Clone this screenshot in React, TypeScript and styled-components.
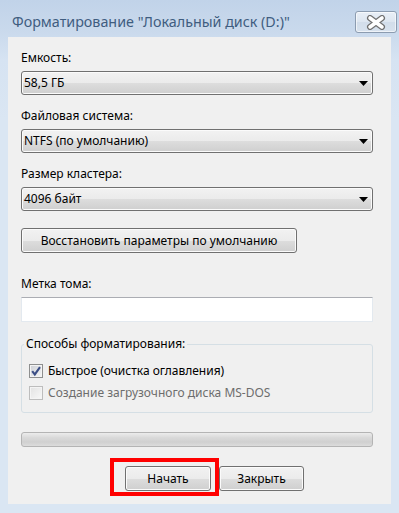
import styled, { createGlobalStyle } from "styled-components";

const GlobalStyle = createGlobalStyle`
  body {
    margin: 0;
    font-family: "Noto Sans", "Open Sans", sans-serif;
    font-size: 12px;
    color: #000;
  }
  * {
    box-sizing: border-box;
  }
`;

const Window = styled.div`
  width: 399px;
  height: 513px;
  display: flex;
  flex-direction: column;
  background: linear-gradient(#c1d3e9 0, #c9d9ec 30px, #d6e3f2 60px, #dae6f3 120px);
`;

const TitleBar = styled.div`
  height: 37px;
  padding: 11px 2px 0 12px;
  display: flex;
  justify-content: space-between;
  align-items: flex-start;
`;

const Title = styled.div`
  font-size: 14.3px;
  line-height: 22px;
  color: #3f5d80;
`;

const CloseButton = styled.div`
  width: 42px;
  height: 22px;
  border: 1px solid #8c9cb0;
  border-radius: 3px;
  background: linear-gradient(#e9eff7, #dde6f0 50%, #d2ddea 51%, #d8e2ee);
  box-shadow: inset 0 0 0 1px rgba(255, 255, 255, 0.6);
  display: flex;
  justify-content: center;
  align-items: center;
`;

const Panel = styled.div`
  flex: 1;
  margin: 0 8px 9px 8px;
  padding: 13px 18px 0 13px;
  background: #f0f0f0;
  display: flex;
  flex-direction: column;
`;

const Label = styled.div<{ $top?: number }>`
  line-height: 16px;
  margin-top: ${(p) => p.$top ?? 0}px;
  margin-bottom: 5px;
`;

const Select = styled.div`
  height: 24px;
  border: 1px solid #707070;
  border-radius: 3px;
  padding: 0 4px 0 2px;
  background: linear-gradient(#f2f2f2, #ebebeb 50%, #dddddd 51%, #cfcfcf);
  box-shadow: inset 0 0 0 1px #fbfbfb;
  display: flex;
  justify-content: space-between;
  align-items: center;
  margin-bottom: 13px;
  line-height: 16px;
`;

const PushButton = styled.div<{ $width: number; $top?: number }>`
  width: ${(p) => p.$width}px;
  height: 25px;
  margin-top: ${(p) => p.$top ?? 0}px;
  border: 1px solid #707070;
  border-radius: 3px;
  background: linear-gradient(#f2f2f2, #ebebeb 50%, #dddddd 51%, #cfcfcf);
  box-shadow: inset 0 0 0 1px #fbfbfb;
  display: flex;
  justify-content: center;
  align-items: center;
  flex-shrink: 0;
`;

const TextBox = styled.input`
  height: 25px;
  width: 100%;
  border: 1px solid #e3e9ef;
  border-top-color: #abadb3;
  background: #fff;
  outline: none;
  font: inherit;
  padding: 0 3px;
`;

const Group = styled.fieldset`
  margin: 14px 0 0 0;
  padding: 8px 7px 8px 7px;
  border: 1px solid #d5dfe5;
  border-radius: 3px;
  min-width: 0;
`;

const Legend = styled.legend`
  padding: 0 2px;
  line-height: 16px;
  margin-left: -5px;
`;

const CheckRow = styled.div`
  height: 22px;
  display: flex;
  align-items: center;
  gap: 5px;
`;

const CheckBox = styled.div<{ $disabled?: boolean }>`
  width: 14px;
  height: 14px;
  border: 1px solid ${(p) => (p.$disabled ? "#bdbdbd" : "#8e8f8f")};
  background: ${(p) =>
    p.$disabled
      ? "linear-gradient(135deg, #e2e2e2, #f8f8f8)"
      : "linear-gradient(135deg, #cdd0d6, #f6f6f6)"};
  box-shadow: inset 0 0 0 1px #f4f4f4;
  display: flex;
  justify-content: center;
  align-items: center;
`;

const CheckText = styled.span<{ $disabled?: boolean }>`
  line-height: 16px;
  color: ${(p) => (p.$disabled ? "#6d6d6d" : "#000")};
`;

const Progress = styled.div`
  margin-top: 19px;
  height: 15px;
  border: 1px solid #b4b4b4;
  border-radius: 3px;
  background: linear-gradient(#ececec, #dadada 35%, #d0d0d0 70%, #dcdcdc);
`;

const ButtonRow = styled.div`
  margin-top: 11px;
  padding-left: 89px;
  display: flex;
  align-items: flex-start;
`;

const Highlight = styled.div`
  border: 4px solid #ff0000;
  padding: 4px 4px 1px 11px;
`;

const Arrow = () => (
  <svg width="9" height="5" viewBox="0 0 9 5">
    <polygon points="0,0 9,0 4.5,5" fill="#000" />
  </svg>
);

const Check = () => (
  <svg width="12" height="12" viewBox="0 0 12 12">
    <path d="M2.2 6.2 L4.8 9.4 L10 2.2" fill="none" stroke="#3c4f86" strokeWidth="2.1" />
  </svg>
);

const CloseGlyph = () => (
  <svg width="20" height="15" viewBox="0 0 20 15">
    <path d="M4 3 L16 12 M16 3 L4 12" stroke="#707070" strokeWidth="6" strokeLinecap="round" />
    <path d="M4 3 L16 12 M16 3 L4 12" stroke="#ffffff" strokeWidth="3.6" strokeLinecap="round" />
  </svg>
);

const fields = [
  { label: "Емкость:", value: "58,5 ГБ" },
  { label: "Файловая система:", value: "NTFS (по умолчанию)" },
  { label: "Размер кластера:", value: "4096 байт" },
];

export default function App() {
  return (
    <>
      <GlobalStyle />
      <Window>
        <TitleBar>
          <Title>Форматирование "Локальный диск (D:)"</Title>
          <CloseButton>
            <CloseGlyph />
          </CloseButton>
        </TitleBar>
        <Panel>
          {fields.map((f) => (
            <div key={f.label}>
              <Label>{f.label}</Label>
              <Select>
                <span>{f.value}</span>
                <Arrow />
              </Select>
            </div>
          ))}
          <PushButton $width={276} $top={4}>
            Восстановить параметры по умолчанию
          </PushButton>
          <Label $top={23}>Метка тома:</Label>
          <TextBox defaultValue="" />
          <Group>
            <Legend>Способы форматирования:</Legend>
            <CheckRow>
              <CheckBox>
                <Check />
              </CheckBox>
              <CheckText>Быстрое (очистка оглавления)</CheckText>
            </CheckRow>
            <CheckRow>
              <CheckBox $disabled />
              <CheckText $disabled>Создание загрузочного диска MS-DOS</CheckText>
            </CheckRow>
          </Group>
          <Progress />
          <ButtonRow>
            <Highlight>
              <PushButton $width={86}>Начать</PushButton>
            </Highlight>
            <PushButton $width={85} $top={8}>
              Закрыть
            </PushButton>
          </ButtonRow>
        </Panel>
      </Window>
    </>
  );
}
